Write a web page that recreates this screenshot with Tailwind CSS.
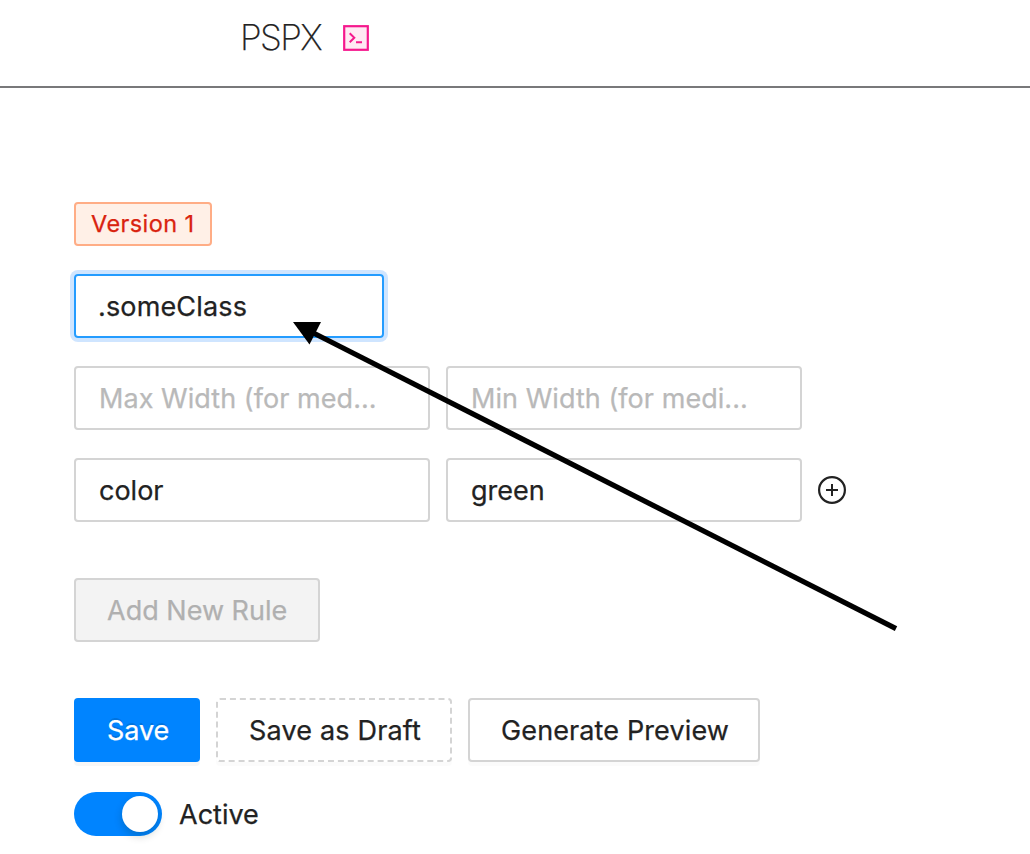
<!DOCTYPE html>
<html lang="en">
<head>
<meta charset="utf-8">
<title>PSPX</title>
<script src="https://cdn.jsdelivr.net/npm/@tailwindcss/browser@4"></script>
</head>
<body class="relative h-[854px] overflow-hidden bg-white font-['Inter','Liberation_Sans',sans-serif] text-[27px] leading-[62px] text-[#222222] [-webkit-text-stroke:0.25px]">
<header class="flex h-[88px] items-start border-b-2 border-[#78787a] pl-[240px]">
  <h1 class="mt-[7px] w-[103px] text-[35px] leading-[60px] font-extralight tracking-[-1.6px] whitespace-nowrap">PSPX</h1>
  <svg class="mt-[25px] size-[26px]" viewBox="0 0 26 26" fill="none">
    <rect x="1.2" y="1.2" width="23.6" height="23.6" fill="#ffe9f3" stroke="#f5188d" stroke-width="2.2"/>
    <path d="M6.7 8.3L11.3 12.8L6.7 17.3M13 17.2H19" stroke="#f5188d" stroke-width="2"/>
  </svg>
</header>
<main class="flex flex-col items-start pt-[114px] pl-[74px]">
  <span class="h-[44px] w-[138px] rounded-[4px] border-2 border-[#ffad86] bg-[#fff0e7] pl-[15px] text-[23.5px] leading-[40px] tracking-[0.4px] whitespace-nowrap text-[#d9230f]">Version 1</span>
  <div class="mt-[28px] h-[64px] w-[310px] rounded-[4px] border-2 border-[#249cff] pl-[22px] whitespace-nowrap shadow-[0_0_0_4px_#cfe5ff]"><span class="tracking-[0.15px]">.someClass</span></div>
  <div class="mt-[28px] flex gap-4 whitespace-nowrap text-[#b9b9b9]">
    <div class="h-[64px] w-[356px] rounded-[4px] border-2 border-[#d4d4d4] pl-[23px]"><span class="tracking-[0.05px]">Max Width (for med...</span></div>
    <div class="h-[64px] w-[356px] rounded-[4px] border-2 border-[#d4d4d4] pl-[23px]"><span class="tracking-[0.05px]">Min Width (for medi...</span></div>
  </div>
  <div class="mt-[28px] flex items-center gap-4">
    <div class="h-[64px] w-[356px] rounded-[4px] border-2 border-[#d4d4d4] pl-[23px]"><span>color</span></div>
    <div class="h-[64px] w-[356px] rounded-[4px] border-2 border-[#d4d4d4] pl-[23px]"><span>green</span></div>
    <svg class="size-[28px]" viewBox="0 0 28 28" fill="none" stroke="#222222">
      <circle cx="14" cy="14" r="12.9" stroke-width="2.2"/>
      <path d="M14 8V20M8 14H20" stroke-width="2"/>
    </svg>
  </div>
  <button class="mt-[56px] h-[64px] w-[246px] rounded-[4px] border-2 border-[#d4d4d4] bg-[#f3f3f3] pt-[2px] pl-[31px] text-left leading-[58px] whitespace-nowrap text-[#b0b0b0]"><span>Add New Rule</span></button>
  <div class="mt-[56px] flex gap-4 text-left whitespace-nowrap">
    <button class="h-[64px] w-[126px] rounded-[4px] bg-[#0084ff] pt-[2px] pl-[33px] text-left leading-[62px] text-white shadow-[0_4px_0_rgba(0,0,0,0.03)] [text-shadow:0_-2px_0_rgba(0,0,0,0.12)]"><span class="tracking-[-0.1px]">Save</span></button>
    <button class="h-[64px] w-[236px] rounded-[4px] border-2 border-dashed border-[#d4d4d4] bg-white pt-[2px] pl-[31px] text-left leading-[58px] shadow-[0_4px_0_rgba(0,0,0,0.016)]"><span class="tracking-[0.18px]">Save as Draft</span></button>
    <button class="h-[64px] w-[292px] rounded-[4px] border-2 border-[#d4d4d4] bg-white pt-[2px] pl-[31px] text-left leading-[58px] shadow-[0_4px_0_rgba(0,0,0,0.016)]"><span class="tracking-[0.12px]">Generate Preview</span></button>
  </div>
  <div class="mt-[30px] flex h-[44px] items-center gap-[17px]">
    <div class="flex h-[44px] w-[88px] items-center justify-end rounded-full bg-[#0084ff] pr-1">
      <div class="size-[36px] rounded-full bg-white shadow-[0_4px_8px_rgba(0,35,11,0.2)]"></div>
    </div>
    <span class="pt-[2px]">Active</span>
  </div>
</main>
<svg class="absolute top-0 left-0 h-[854px] w-[1030px]" viewBox="0 0 1030 854">
  <path d="M310 331.3L896 628.6" stroke="#000" stroke-width="5.2"/>
  <path d="M293 322H321L309.5 344.5Z" fill="#000"/>
</svg>
</body>
</html>
